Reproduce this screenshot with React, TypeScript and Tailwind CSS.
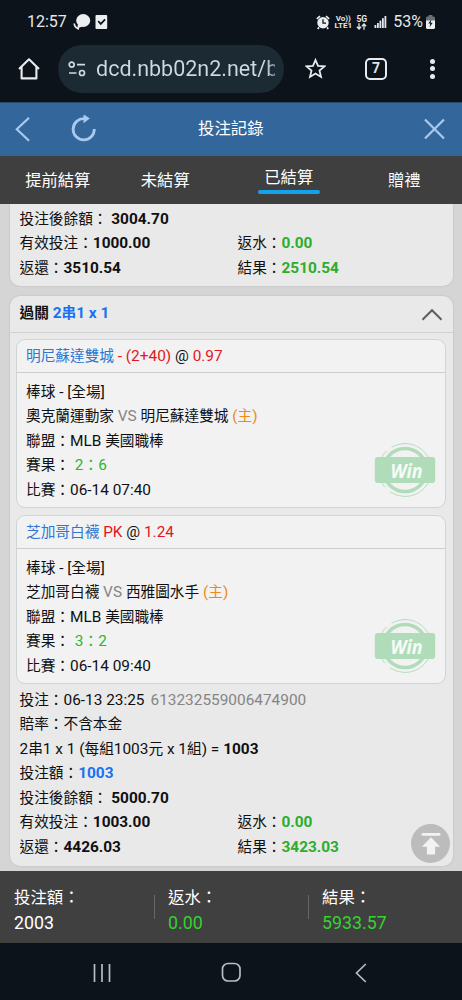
import React from "react";
import clsx from "clsx";

interface Leg {
  team: string;
  handicap: string;
  odds: string;
  home: string;
  away: string;
  score: string;
  time: string;
}

const legs: Leg[] = [
  {
    team: "明尼蘇達雙城",
    handicap: "- (2+40)",
    odds: "0.97",
    home: "奧克蘭運動家",
    away: "明尼蘇達雙城",
    score: "2：6",
    time: "06-14 07:40",
  },
  {
    team: "芝加哥白襪",
    handicap: "PK",
    odds: "1.24",
    home: "芝加哥白襪",
    away: "西雅圖水手",
    score: "3：2",
    time: "06-14 09:40",
  },
];

const tabs = ["提前結算", "未結算", "已結算", "贈禮"];

// Chinese runs are set slightly smaller than the latin ones
const Txt = ({ children, className }: { children: string; className?: string }) => (
  <span className={className}>
    {children.split(/([\u3000-\u9fff\uff00-\uffef]+)/).map((part, i) =>
      i % 2 ? (
        <span key={i} className="text-[0.953em]">
          {part}
        </span>
      ) : (
        part
      )
    )}
  </span>
);

const Row = ({ children }: { children: React.ReactNode }) => (
  <div className="h-[24.5px] whitespace-pre leading-[24.5px]">{children}</div>
);

const StatusBar = () => (
  <div className="flex h-11 items-center pl-[27px] pr-[27px] text-[16px] text-[#e4e8eb]">
    <span className="w-[41px]">12:57</span>
    <svg className="ml-[4px]" width="19" height="18" viewBox="0 0 19 18" fill="#eceff1">
      <ellipse cx="11.2" cy="7.5" rx="7" ry="6.4" />
      <path d="M6 11l-.8 4.500 5-2z" />
      <path d="M2.200 10.500c.3 2.800 1.900 4.600 4.800 5.600" fill="none" stroke="#eceff1" strokeWidth="1.700" />
    </svg>
    <svg className="ml-[4px]" width="13" height="16" viewBox="0 0 13 16">
      <rect x="0.500" y="1" width="11.700" height="14" rx="1" fill="#eceff1" />
      <path d="M3.200 7.200l2.600 2.700 4.300-4.600" fill="none" stroke="#0c131a" strokeWidth="1.700" />
    </svg>
    <div className="ml-auto flex items-center">
      <svg width="14" height="15" viewBox="0 0 14 15">
        <circle cx="7" cy="7.700" r="5.700" fill="#eceff1" />
        <path d="M.8 3.800L4 1.200M13.200 3.800L10 1.200M3 12.400l-1.300 1.500M11 12.400l1.300 1.500" stroke="#eceff1" strokeWidth="1.700" />
        <path d="M7 4.300v3.900h3" fill="none" stroke="#0c131a" strokeWidth="1.300" />
      </svg>
      <div className="ml-[4px] flex w-[18px] flex-col items-center text-[8px] font-bold leading-[7.5px]">
        <span>Vo))</span>
        <span>LTE1</span>
      </div>
      <div className="ml-[4px] flex flex-col items-center text-[8.5px] font-bold leading-[8px]">
        <span>5G</span>
        <svg width="11" height="7" viewBox="0 0 11 7" fill="none" stroke="#e4e8eb" strokeWidth="1.300">
          <path d="M3 .3v5.500M.9 3.800L3 6l2.100-2.200M8 6.700V1.200M5.900 3.200L8 1l2.100 2.200" />
        </svg>
      </div>
      <svg className="ml-[7px]" width="13" height="14" viewBox="0 0 13 14" fill="#e4e8eb">
        <rect x="0.500" y="10" width="1.800" height="3" />
        <rect x="3" y="8" width="1.800" height="5" />
        <rect x="5.500" y="5.600" width="1.800" height="7.400" />
        <rect x="8" y="3.200" width="1.800" height="9.800" />
        <rect x="10.500" y="1" width="1.800" height="12" />
      </svg>
      <span className="ml-[6px]">53%</span>
      <svg className="ml-[3px]" width="9" height="14" viewBox="0 0 9 14">
        <rect x="2.600" y="0" width="3.800" height="3" fill="#687077" />
        <rect x="0" y="1.500" width="9" height="12.500" rx="1.400" fill="#687077" />
        <path d="M0 5.500h9v7.100q0 1.400-1.400 1.400H1.400Q0 14 0 12.600z" fill="#eceff1" />
        <path d="M5.300 4.500L2.300 8.600h2l-.7 3.700 3.100-4.600h-2z" fill="#0c131a" />
      </svg>
    </div>
  </div>
);

const BrowserBar = () => (
  <div className="flex h-[49px] items-center text-[#dde3e8]">
    <svg className="ml-[18px] shrink-0" width="22" height="24" viewBox="0 0 22 24" fill="none" stroke="#e8ecef" strokeWidth="2.100">
      <path d="M1 12L11 2.300 21 12M3.600 10v11.400h14.800V10" strokeLinejoin="round" />
    </svg>
    <div className="ml-[18px] flex h-12 w-[226px] items-center rounded-full bg-[#1b2a33] pl-[10px]">
      <svg width="18" height="16" viewBox="0 0 18 16" fill="none" stroke="#cfdae1" strokeWidth="1.700">
        <circle cx="3.700" cy="3.600" r="2.500" />
        <path d="M9 3.600h8M1 12h7.500" />
        <circle cx="14" cy="12" r="2.500" />
      </svg>
      <div className="ml-[10px] w-[179px] overflow-hidden whitespace-nowrap bg-linear-to-r from-[#cddbe4] from-95% to-[#7d8d97] bg-clip-text text-[21.5px] leading-8 text-transparent">
        dcd.nbb02n2.net/b
      </div>
    </div>
    <svg className="ml-[21px] shrink-0" width="21" height="21" viewBox="0 0 21 21" fill="none" stroke="#e8ecef" strokeWidth="1.800">
      <path d="M10.500 2l2.500 5.900 6.400.5-4.900 4.200 1.500 6.300-5.500-3.400L5 18.900l1.500-6.300L1.600 8.400 8 7.900z" />
    </svg>
    <div className="ml-[39px] flex h-[22px] w-[22px] items-center justify-center rounded-[5px] border-2 border-[#e8ecef] text-[14px] font-bold">
      7
    </div>
    <div className="ml-[43px] flex flex-col gap-[2.5px]">
      {[0, 1, 2].map((i) => (
        <span key={i} className="h-[5px] w-[5px] rounded-full bg-[#e8ecef]" />
      ))}
    </div>
  </div>
);

const Header = () => (
  <header className="flex h-[53px] items-center bg-[#33669b]">
    <svg className="ml-[15px]" width="16" height="26" viewBox="0 0 16 26" fill="none" stroke="#a9c9ee" strokeWidth="2.200">
      <path d="M14 .8L1.800 12.300 14 23.800" />
    </svg>
    <svg className="ml-[40px]" width="26" height="30" viewBox="0 0 26 30">
      <path d="M13.500 3.700A10.600 10.600 0 1 0 23.300 14" fill="none" stroke="#a9c9ee" strokeWidth="2.800" />
      <path d="M12.500 -.8l6.300 4.200-6.300 4.800z" fill="#a9c9ee" />
    </svg>
    <h1 className="ml-[101px] text-[16.4px] text-white">投注記錄</h1>
    <svg className="ml-auto mr-[17px]" width="21" height="21" viewBox="0 0 21 21" stroke="#a9c9ee" strokeWidth="2.200">
      <path d="M1 .5l19 19M20 .5L1 19.500" />
    </svg>
  </header>
);

const Tabs = () => (
  <nav className="flex h-12 bg-[#3f3f3f] text-[16.3px] text-white">
    {tabs.map((tab, i) => (
      <div
        key={tab}
        className={clsx(
          "flex w-[115.5px] flex-col items-center justify-center pt-px",
          i === 1 && "pr-4"
        )}
      >
        <span className={clsx("leading-6", i === 2 && "-mt-px")}>{tab}</span>
        {i === 2 && <span className="h-1 w-[62px] rounded-sm bg-[#14a3ea]" />}
      </div>
    ))}
  </nav>
);

const WinStamp = () => (
  <svg className="absolute bottom-[9px] right-[9px]" width="62" height="56" viewBox="0 0 62 56">
    <circle cx="31" cy="28" r="26.500" fill="none" stroke="#b5dfc0" strokeWidth="1" strokeDasharray="57 7 40 6" />
    <circle cx="31" cy="28" r="21.500" fill="none" stroke="#b0dcba" strokeWidth="3.500" />
    <rect x="0.800" y="15" width="60.400" height="26" rx="3" fill="#b0dcba" />
    <text x="32.500" y="35.500" textAnchor="middle" fill="#f7fcf8" fontFamily="Open Sans, sans-serif" fontSize="19" fontWeight="700" fontStyle="italic" textLength="32" lengthAdjust="spacingAndGlyphs">
      Win
    </text>
  </svg>
);

const LegCard = ({ leg }: { leg: Leg }) => (
  <div className="relative h-[169px] rounded-[9px] border border-[#cfd4d4] bg-[#f2f2f2]">
    <div className="h-[33px] whitespace-pre border-b border-[#cdcdcd] px-[9px] leading-[33px]">
      <Txt className="text-[#2f76d2]">{leg.team}</Txt>
      <span className="text-[#e5161d]"> {leg.handicap}</span>
      {" @ "}
      <span className="text-[#e5161d]">{leg.odds}</span>
    </div>
    <div className="px-[9px] pt-[6.5px]">
      <Row>
        <Txt>棒球 - [全場]</Txt>
      </Row>
      <Row>
        <Txt>{leg.home}</Txt>
        <span className="text-[#858585]"> VS </span>
        <Txt>{leg.away}</Txt> <Txt className="text-[#ef8a17]">(主)</Txt>
      </Row>
      <Row>
        <Txt>聯盟：MLB 美國職棒</Txt>
      </Row>
      <Row>
        <Txt>賽果：</Txt> <Txt className="ml-px text-[#2db52d]">{leg.score}</Txt>
      </Row>
      <Row>
        <Txt>{`比賽：${leg.time}`}</Txt>
      </Row>
    </div>
    <WinStamp />
  </div>
);

interface SummaryProps {
  balance: string;
  valid: string;
  returned: string;
  result: string;
}

const Summary = ({ balance, valid, returned, result }: SummaryProps) => (
  <>
    <Row>
      <Txt>投注後餘額：</Txt> <b>{balance}</b>
    </Row>
    <div className="grid grid-cols-[218px_1fr]">
      <Row>
        <Txt>有效投注：</Txt>
        <b>{valid}</b>
      </Row>
      <Row>
        <Txt>返水：</Txt>
        <b className="text-[#2bae2b]">0.00</b>
      </Row>
      <Row>
        <Txt>返還：</Txt>
        <b>{returned}</b>
      </Row>
      <Row>
        <Txt>結果：</Txt>
        <b className="text-[#2bae2b]">{result}</b>
      </Row>
    </div>
  </>
);

const BetCard = () => (
  <section className="mt-[10px] h-[570px] rounded-[10px] bg-[#e9e9e9] shadow-[0_0_2px_rgba(0,0,0,0.15)]">
    <div className="flex h-[37px] items-center justify-between border-b border-[#d2d2d2] pl-[9.5px] pr-[10px] font-bold">
      <span>
        <Txt>過關 </Txt>
        <Txt className="text-[#1b72f0]">2串1 x 1</Txt>
      </span>
      <svg width="22" height="13" viewBox="0 0 22 13" fill="none" stroke="#5d5d5d" strokeWidth="2">
        <path d="M1.500 11.800L11 2.200l9.500 9.600" />
      </svg>
    </div>
    <div className="flex flex-col gap-[7px] pl-[6px] pr-[7px] pt-[6px]">
      {legs.map((leg) => (
        <LegCard key={leg.team} leg={leg} />
      ))}
    </div>
    <div className="px-[9.5px] pt-[3.5px]">
      <Row>
        <Txt>投注：06-13 23:25</Txt>
        <span className="ml-[6px] text-[#858585]">613232559006474900</span>
      </Row>
      <Row>
        <Txt>賠率：不含本金</Txt>
      </Row>
      <Row>
        <Txt>2串1 x 1 (每組1003元 x 1組) = </Txt>
        <b>1003</b>
      </Row>
      <Row>
        <Txt>投注額：</Txt>
        <b className="text-[#1b72f0]">1003</b>
      </Row>
      <Summary balance="5000.70" valid="1003.00" returned="4426.03" result="3423.03" />
    </div>
  </section>
);

const Totals = () => (
  <footer className="flex h-[72px] items-center bg-[#404040] pl-[14px] pt-[5px] text-[17.8px] leading-[25px] text-white">
    <div className="flex w-[154px] flex-col">
      <Txt className="text-[17.2px]">投注額：</Txt>
      <span>2003</span>
    </div>
    <div className="flex w-[154px] flex-col">
      <Txt className="text-[17.2px]">返水：</Txt>
      <span className="text-[#35d32f]">0.00</span>
    </div>
    <div className="flex flex-col">
      <Txt className="text-[17.2px]">結果：</Txt>
      <span className="text-[#35d32f]">5933.57</span>
    </div>
    <span className="absolute left-[154px] -mt-[5px] h-6 w-px bg-[#666]" />
    <span className="absolute left-[308px] -mt-[5px] h-6 w-px bg-[#666]" />
  </footer>
);

const SystemNav = () => (
  <div className="flex h-[57px] items-center bg-[#0c131a] pt-[2px]">
    <svg className="ml-[92px]" width="20" height="20" viewBox="0 0 20 20" stroke="#b9bdc1" strokeWidth="1.700">
      <path d="M2.500 1v18M10 1v18M17.500 1v18" />
    </svg>
    <svg className="ml-[109px]" width="21" height="21" viewBox="0 0 21 21" fill="none" stroke="#b9bdc1" strokeWidth="1.700">
      <rect x="1.500" y="1.500" width="17.500" height="17.500" rx="5.500" />
    </svg>
    <svg className="ml-[113px]" width="12" height="20" viewBox="0 0 12 20" fill="none" stroke="#b9bdc1" strokeWidth="1.700">
      <path d="M10.800 1L1.500 10l9.300 9" />
    </svg>
  </div>
);

const App = () => {
  return (
    <div className="relative flex h-[1000px] w-[462px] flex-col overflow-hidden bg-[#0c131a] font-['Roboto','Noto_Sans_CJK_TC',sans-serif]">
      <StatusBar />
      <BrowserBar />
      <div className="mt-[9px] h-px shrink-0 bg-[#24496d]" />
      <Header />
      <Tabs />
      <main className="relative h-[667px] shrink-0 overflow-hidden bg-[#d5d5d5] pl-[10px] pr-[9px] text-[15.4px] text-[#101010]">
        <section className="h-[82px] rounded-b-[10px] bg-[#e9e9e9] px-[9.5px] pt-[2.5px] shadow-[0_0_2px_rgba(0,0,0,0.15)]">
          <Summary balance="3004.70" valid="1000.00" returned="3510.54" result="2510.54" />
        </section>
        <BetCard />
        <button className="absolute bottom-[8px] right-[12px] flex h-[39px] w-[39px] items-center justify-center rounded-full bg-[#bcbcbc]">
          <svg width="20" height="24" viewBox="0 0 22 24" fill="#f2f2f2">
            <rect x="0.500" y="0" width="21" height="3" rx="1.500" />
            <path d="M11 4.500l10 10.500h-5.500v8.500h-9V15H1z" />
          </svg>
        </button>
      </main>
      <Totals />
      <SystemNav />
    </div>
  );
};

export default App;
